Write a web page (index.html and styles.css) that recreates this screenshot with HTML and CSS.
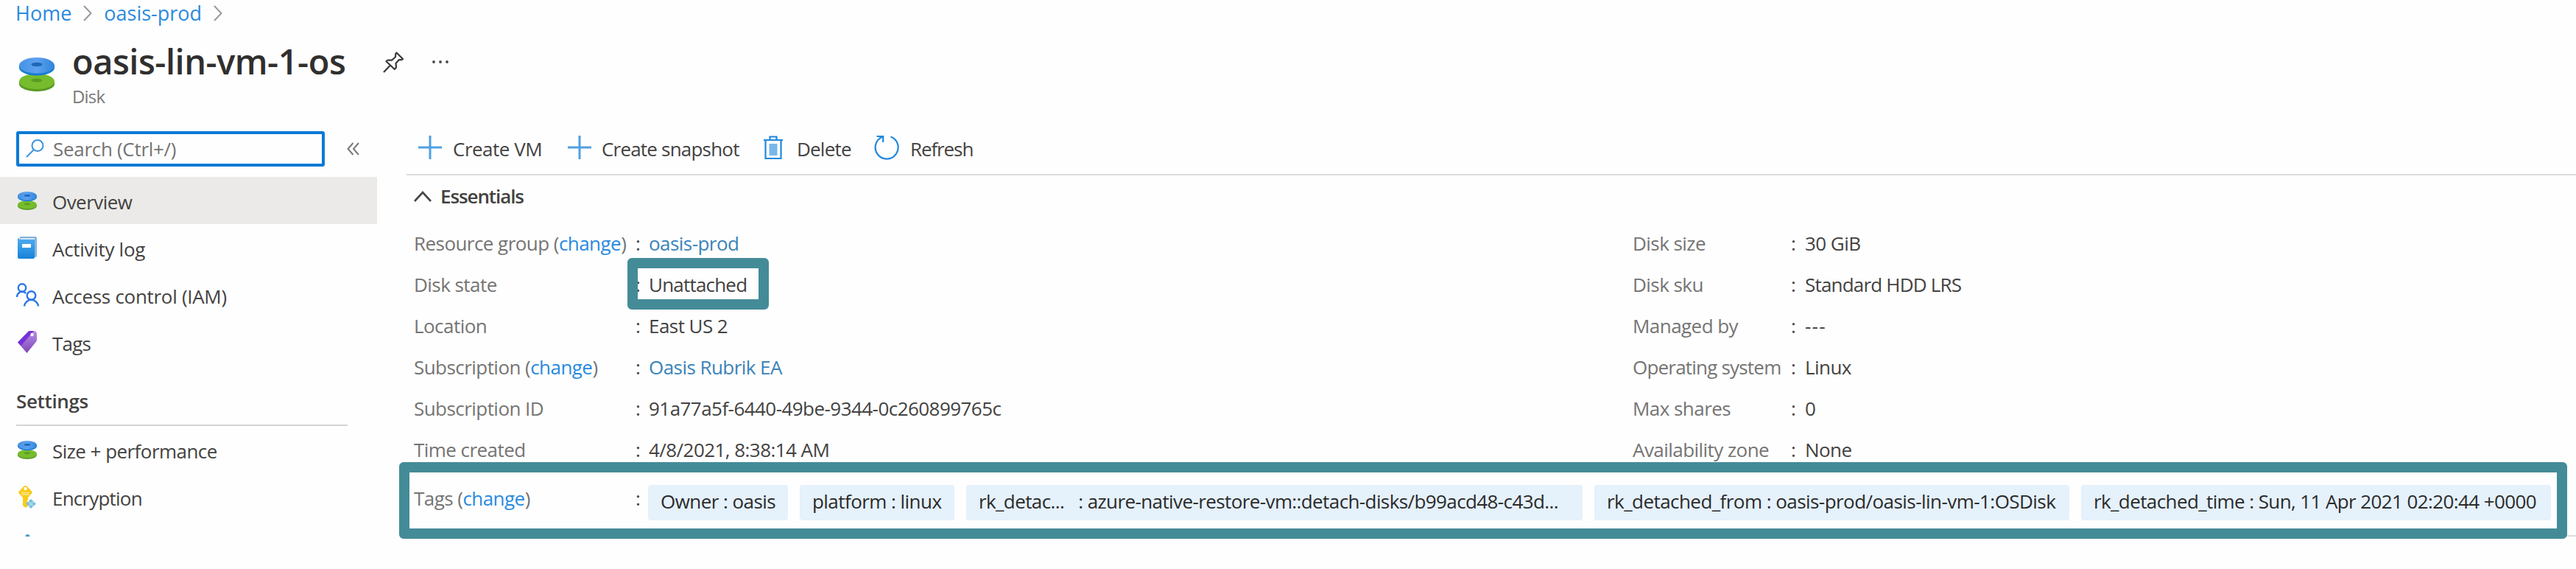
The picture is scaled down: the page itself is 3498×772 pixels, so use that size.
FILE: index.html
```html
<!DOCTYPE html>
<html lang="en">
<head>
<meta charset="utf-8">
<title>oasis-lin-vm-1-os</title>
<link rel="stylesheet" href="styles.css">
</head>
<body>
<svg class="defs" width="0" height="0">
  <defs>
    <linearGradient id="blueDisk" x1="0" y1="0" x2="1" y2="0"><stop offset="0" stop-color="#4593e4"/><stop offset=".5" stop-color="#5ea0ef"/><stop offset="1" stop-color="#2f86dc"/></linearGradient>
    <linearGradient id="book" x1="0" y1="0" x2="0" y2="1"><stop offset="0" stop-color="#50acee"/><stop offset="1" stop-color="#1783da"/></linearGradient>
    <linearGradient id="tagFill" x1="0" y1="0" x2="0" y2="1"><stop offset="0" stop-color="#b98be6"/><stop offset="1" stop-color="#7d48b8"/></linearGradient>
    <symbol id="disks" viewBox="0 0 48 46" preserveAspectRatio="none">
      <path d="M0 32v4c0 5.500 10.700 10 24 10s24-4.500 24-10v-4z" fill="#5a9a22"/>
      <ellipse cx="24" cy="32.500" rx="24" ry="10.500" fill="#76bc2d"/>
      <ellipse cx="24" cy="31" rx="7.500" ry="2.600" fill="#5a9a22"/>
      <path d="M0 10v4c0 5.500 10.700 10.500 24 10.500S48 19.500 48 14v-4z" fill="#1a7dd0"/>
      <ellipse cx="24" cy="10.800" rx="24" ry="10.800" fill="url(#blueDisk)"/>
      <ellipse cx="24" cy="9.500" rx="7.500" ry="2.800" fill="#1f69b4"/>
    </symbol>
    <symbol id="plus" viewBox="0 0 32 32"><path d="M16 0v32M0 16h32" stroke="#4ea0e2" stroke-width="3" fill="none"/></symbol>
    <symbol id="chev" viewBox="0 0 12 22"><path d="M1 1l9.500 10L1 21" stroke="#9b9a99" stroke-width="2" fill="none"/></symbol>
  </defs>
</svg>

<header>
  <nav class="breadcrumb">
    <a>Home</a><svg width="12" height="22"><use href="#chev"/></svg>
    <a>oasis-prod</a><svg width="12" height="22"><use href="#chev"/></svg>
  </nav>
  <div class="title-row">
    <svg class="title-icon" width="48" height="46"><use href="#disks"/></svg>
    <div>
      <div class="title-line">
        <h1>oasis-lin-vm-1-os</h1>
        <svg class="pin" width="28" height="29" viewBox="0 0 28 29" fill="none" stroke="#3b3a39" stroke-width="2.200" stroke-linejoin="round"><path d="M18.500 1.500L27 10l-2 1.200-3-.2-4.500 5 .5 5.500-2.200 2.500L4.500 13.200l2.200-1.700 5.300.2L17 7.200l.3-4.200zM10 18.500L1 28"/></svg>
        <svg class="more" width="22" height="4" fill="#4a4948"><circle cx="2" cy="2" r="1.900"/><circle cx="11" cy="2" r="1.900"/><circle cx="20" cy="2" r="1.900"/></svg>
      </div>
      <p class="kind">Disk</p>
    </div>
  </div>
</header>

<div class="layout">
  <aside>
    <div class="search-row">
      <div class="search">
        <svg width="25" height="25" viewBox="0 0 25 25" fill="none" stroke="#3b93dd" stroke-width="2"><ellipse cx="16" cy="8.500" rx="7.500" ry="7.500"/><path d="M11 14L1 24"/></svg>
        <span>Search (Ctrl+/)</span>
      </div>
      <svg class="collapse" width="17" height="18" viewBox="0 0 17 18" fill="none" stroke="#7a7978" stroke-width="2"><path d="M8.500 1L1.500 9l7 8M16 1L9 9l7 8"/></svg>
    </div>
    <ul class="menu">
      <li class="active"><svg width="26" height="25"><use href="#disks"/></svg><span>Overview</span></li>
      <li><svg width="26" height="30" viewBox="0 0 26 30"><path d="M3 0h21a2 2 0 0 1 2 2v24a2 2 0 0 1-2 2H3z" fill="#86b4dc"/><path d="M4 2h19v24H4z" fill="#d3e5f5"/><path d="M0 3a2 2 0 0 1 2-1l.5 2H23v24a2 2 0 0 1-2 2H2a2 2 0 0 1-2-2z" fill="url(#book)"/><path d="M6 10h12v5H6z" fill="#fff"/></svg><span class="loose">Activity log</span></li>
      <li><svg class="people" width="31" height="32" viewBox="0 0 31 32" fill="none" stroke="#2b76e4" stroke-width="2.400"><circle cx="8" cy="6.500" r="5.200"/><path d="M1 19c0-4 3-7.300 7-7.300 2 0 4 .8 5.200 2.200"/><circle cx="20.500" cy="17" r="5.800"/><path d="M11 31.500c.5-5 4.600-8.700 9.500-8.700s9 3.700 9.500 8.700"/></svg><span class="loose">Access control (IAM)</span></li>
      <li><svg width="26" height="30" viewBox="0 0 26 30"><path d="M0 15.500L14.500.8C15 .3 16 0 17 0h5c2 0 4 1.500 4 4v8c0 1-.3 2-1 2.700L12.500 30z" fill="url(#tagFill)"/><path d="M0 15.500L14.500.8C15 .3 16 0 17 0h5L4.500 20z" fill="#7432d8"/><circle cx="19.500" cy="5" r="2.200" fill="#fff"/></svg><span class="snug">Tags</span></li>
    </ul>
    <h2>Settings</h2>
    <ul class="menu">
      <li><svg width="26" height="25"><use href="#disks"/></svg><span>Size + performance</span></li>
      <li><svg class="key" width="24" height="31" viewBox="0 0 24 31"><path d="M9.500 0c1 0 1.700.3 2.400 1l6 6.500c1 1 1 2.300 0 3.300L13 16v3l-1.500 2 1.500 2-1.500 2 1.500 2-3 3-4-3V16L1 10.800c-1-1-1-2.300 0-3.300L7 1c.7-.7 1.500-1 2.500-1z" fill="#fbca1a"/><circle cx="9.500" cy="4" r="2.200" fill="#fff"/><path d="M4 9.500h11M4 12h11" stroke="#fde892" stroke-width="1.400"/><path d="M17 18l7 6.500-7 6.500-7-6.500z" fill="#7dc1dc"/><path d="M13.500 21.500l7 6.500M20.500 21.500l-7 6.500" stroke="#b9dfec" stroke-width="1.200"/></svg><span class="snug">Encryption</span></li>
      <li class="clipped"><svg width="7" height="3" viewBox="0 0 8 4"><path d="M0 4a4 4 0 0 1 8 0z" fill="#4b9fc6"/></svg></li>
    </ul>
  </aside>

  <main>
    <div class="toolbar">
      <button class="create-vm"><svg width="32" height="32"><use href="#plus"/></svg><span>Create VM</span></button>
      <button class="create-snap"><svg width="32" height="32"><use href="#plus"/></svg><span class="snug">Create snapshot</span></button>
      <button class="delete"><svg width="26" height="33" viewBox="0 0 26 33" fill="none" stroke="#2188dc" stroke-width="2.200"><path d="M0 6h26M8.500 6V1.500h9V6M2.500 6v25h21V6"/><path d="M7.500 11h11v16h-11z" fill="#7ab8ea" stroke="none"/></svg><span class="snug">Delete</span></button>
      <button class="refresh"><svg width="34" height="34" viewBox="0 0 34 34" fill="none" stroke="#2188dc" stroke-width="2.200"><path d="M22.500 2.500A15.500 15.500 0 1 1 11 2.800M3.500 2h8.700v8"/></svg><span class="tight">Refresh</span></button>
    </div>
    <div class="essentials">
      <svg width="24" height="15" viewBox="0 0 24 15"><path d="M1 14L12 2l11 12" fill="none" stroke="#484746" stroke-width="2.600"/></svg>
      <span class="tight">Essentials</span>
    </div>
    <div class="columns">
      <dl class="left">
        <dt>Resource group (<a>change</a>)</dt><i>:</i><dd><a class="deep">oasis-prod</a></dd>
        <dt>Disk state</dt><i>:</i><dd><span class="snug">Unattached</span></dd>
        <dt>Location</dt><i>:</i><dd>East US 2</dd>
        <dt>Subscription (<a>change</a>)</dt><i>:</i><dd><a class="deep">Oasis Rubrik EA</a></dd>
        <dt>Subscription ID</dt><i>:</i><dd>91a77a5f-6440-49be-9344-0c260899765c</dd>
        <dt>Time created</dt><i>:</i><dd>4/8/2021, 8:38:14 AM</dd>
      </dl>
      <dl class="right">
        <dt>Disk size</dt><i>:</i><dd>30 GiB</dd>
        <dt>Disk sku</dt><i>:</i><dd class="snug">Standard HDD LRS</dd>
        <dt>Managed by</dt><i>:</i><dd class="wide">---</dd>
        <dt class="snug">Operating system</dt><i>:</i><dd>Linux</dd>
        <dt>Max shares</dt><i>:</i><dd>0</dd>
        <dt>Availability zone</dt><i>:</i><dd>None</dd>
      </dl>
    </div>
    <div class="tags">
      <span class="tags-label">Tags (<a>change</a>)</span><i>:</i>
      <div class="chips">
        <span class="chip owner">Owner : oasis</span>
        <span class="chip platform">platform : linux</span>
        <span class="chip detach"><span>rk_detac...</span><span>: azure-native-restore-vm::detach-disks/b99acd48-c43d...</span></span>
        <span class="chip from">rk_detached_from : oasis-prod/oasis-lin-vm-1:OSDisk</span>
        <span class="chip time">rk_detached_time : Sun, 11 Apr 2021 02:20:44 +0000</span>
      </div>
    </div>
    <div class="highlight state-highlight"></div>
    <div class="highlight tags-highlight"></div>
  </main>
</div>
</body>
</html>
```
FILE: styles.css
```css
* { box-sizing: border-box; margin: 0; padding: 0; }
body {
  width: 3498px;
  height: 772px;
  overflow: hidden;
  background: #fefefe;
  color: #434241;
  font: 26px/36px "Open Sans", "Noto Sans", sans-serif;
  letter-spacing: -0.55px;
  white-space: nowrap;
}
svg { display: block; flex: none; }
.defs { position: absolute; }
ul { list-style: none; }
a { color: #2a8ade; }
a.deep { color: #3a83b8; }
i { font-style: normal; }
.loose { letter-spacing: -0.3px; }
.snug { letter-spacing: -0.8px; }
.tight { letter-spacing: -1.1px; }

header { height: 170px; }
.breadcrumb {
  display: flex;
  align-items: center;
  gap: 16px;
  height: 36px;
  padding-left: 21px;
  font-size: 27px;
  letter-spacing: 0;
}
.title-row { display: flex; padding: 18px 0 0 26px; }
.title-icon { margin: 24px 24px 0 0; }
.title-line { display: flex; height: 56px; }
h1 {
  width: 422px;
  font-size: 47px;
  line-height: 58px;
  font-weight: 600;
  letter-spacing: -0.5px;
  color: #302f2e;
}
.pin { margin-top: 16px; }
.more { margin: 28px 0 0 39px; }
.kind {
  margin-top: 6px;
  font-size: 24px;
  line-height: 30px;
  letter-spacing: -0.8px;
  color: #7b7a79;
}

.layout { display: grid; grid-template-columns: 512px 1fr; }
.search-row { display: flex; padding: 8px 0 14px 22px; }
.search {
  display: flex;
  align-items: center;
  gap: 12px;
  width: 419px;
  height: 48px;
  padding-left: 9px;
  border: 4px solid #0b7ad6;
  border-radius: 3px;
  color: #757473;
  letter-spacing: -0.3px;
}
.search svg { margin-top: -1px; }
.collapse { margin: 15px 0 0 30px; }
.menu li {
  display: flex;
  align-items: center;
  height: 64px;
  padding-left: 24px;
}
.menu svg { margin-right: 21px; }
.menu span { padding-top: 3px; }
.menu .active { background: #ebeae8; }
.menu .people { margin: 0 18px 0 -2px; }
.menu .key { margin: 0 22px 0 1px; }
.menu .clipped { height: 22px; padding: 0 0 0 34px; align-items: flex-end; }
h2 {
  width: 450px;
  height: 82px;
  margin-left: 22px;
  padding-top: 30px;
  border-bottom: 2px solid #d4d3d2;
  font-size: 26px;
  font-weight: 600;
  letter-spacing: -0.35px;
}

main { position: relative; padding-left: 40px; }
.toolbar {
  display: flex;
  height: 68px;
  border-bottom: 2px solid #dcdcdc;
  padding: 10px 0 0 16px;
}
button {
  display: flex;
  align-items: center;
  height: 40px;
  border: 0;
  background: none;
  color: inherit;
  font: inherit;
  letter-spacing: -0.5px;
  text-align: left;
}
button span { padding-top: 3px; }
.create-vm { width: 203px; gap: 15px; }
.create-snap { width: 266px; gap: 14px; }
.delete { width: 150px; gap: 19px; }
.refresh { gap: 15px; }
.essentials {
  display: flex;
  align-items: center;
  gap: 12px;
  height: 64px;
  padding: 0 0 8px 10px;
  font-weight: 600;
}
.columns { display: grid; grid-template-columns: 1655px 1fr; }
dl {
  display: grid;
  grid-auto-rows: 56px;
  line-height: 56px;
}
.left { grid-template-columns: 301px 18px 1fr; padding-left: 10px; }
.right { grid-template-columns: 215px 19px 1fr; padding-left: 10px; }
dt, .tags-label { color: #757473; }
.wide { letter-spacing: 1.2px; }
.tags { display: grid; grid-template-columns: 301px 17px 1fr; padding: 20px 0 20px 10px; height: 90px; border-bottom: 2px solid #dcdcdc; }
.chips { display: flex; gap: 16px; color: #2b2b2b; }
.chip {
  height: 48px;
  padding: 4px 0 0 17px;
  border-radius: 4px;
  background: #e5f1fb;
}
.owner { width: 190px; }
.platform { width: 210px; }
.detach { display: flex; gap: 19px; width: 837px; letter-spacing: -0.6px; }
.from { width: 645px; }
.time { width: 638px; letter-spacing: -0.6px; }
.highlight {
  position: absolute;
  border: 14px solid #448b98;
  border-radius: 6px;
}
.state-highlight { left: 340px; top: 180px; width: 192px; height: 70px; }
.tags-highlight { left: 30px; top: 457px; width: 2944px; height: 104px; }
```
